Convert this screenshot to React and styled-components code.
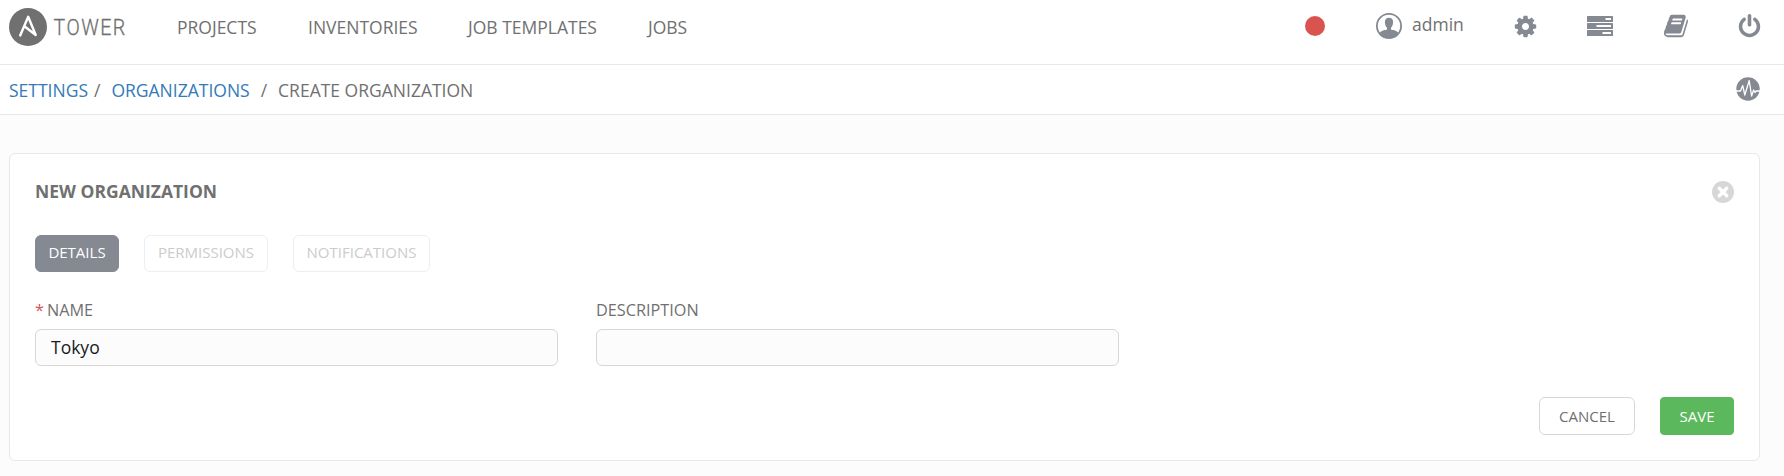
import React from "react";
import styled, { createGlobalStyle } from "styled-components";

const GlobalStyle = createGlobalStyle`
  * {
    box-sizing: border-box;
  }
  body {
    margin: 0;
    background-color: #fcfcfc;
    color: #707070;
    font-family: "Open Sans", "Noto Sans", sans-serif;
    font-size: 17.5px;
    line-height: 24px;
  }
  svg {
    display: block;
    flex-shrink: 0;
  }
`;

const Header = styled.header`
  display: flex;
  height: 65px;
  padding: 0 22px 0 9px;
  background-color: #fff;
  border-bottom: 1px solid #e8e8e8;
`;

const Logo = styled.a`
  display: flex;
  align-items: flex-start;
  width: 168px;
  padding-top: 8px;
`;

const Nav = styled.nav`
  display: flex;
  padding-top: 15px;
`;

const NavLink = styled.a`
  width: ${({ width }) => width}px;
  white-space: nowrap;
`;

const Actions = styled.div`
  display: flex;
  align-items: center;
  height: 52px;
  margin-left: auto;
  color: #848992;
`;

const StatusDot = styled.span`
  width: 20px;
  height: 20px;
  margin-right: 51px;
  border-radius: 50%;
  background-color: #d9534f;
`;

const User = styled.a`
  display: flex;
  align-items: center;
  width: 137px;
  span {
    margin: -4px 0 0 10px;
    color: #707070;
  }
`;

const ActionLink = styled.a`
  width: ${({ width }) => width}px;
`;

const BreadcrumbBar = styled.div`
  display: flex;
  align-items: center;
  height: 50px;
  padding: 1px 24px 0 9px;
  background-color: #fff;
  border-bottom: 1px solid #e8e8e8;
  white-space: pre;
  a {
    color: #337ab7;
  }
  svg {
    margin: -2px 0 0 auto;
  }
`;

const Separator = styled.span`
  margin: 0 ${({ after }) => after}px 0 ${({ before }) => before}px;
`;

const Panel = styled.section`
  height: 308px;
  margin: 38px 24px 0 9px;
  padding: 25px;
  background-color: #fff;
  border: 1px solid #e8e8e8;
  border-radius: 6px;
`;

const PanelHeader = styled.div`
  display: flex;
  align-items: center;
  justify-content: space-between;
  height: 26px;
  h1 {
    margin: -2px 0 0;
    font-size: 17.5px;
    font-weight: 700;
    line-height: 24px;
  }
`;

const Tabs = styled.div`
  display: flex;
  gap: 25px;
  margin-top: 30px;
`;

const Tab = styled.button`
  width: ${({ width }) => width}px;
  height: 37px;
  padding: 0 0 4px;
  background-color: ${({ active }) => (active ? "#848992" : "#fff")};
  border: 1px solid ${({ active }) => (active ? "#848992" : "#eeeeee")};
  border-radius: 6px;
  color: ${({ active }) => (active ? "#fff" : "#cccccc")};
  font-family: inherit;
  font-size: 15px;
`;

const Form = styled.form`
  display: flex;
  gap: 38px;
  margin-top: 25px;
`;

const Field = styled.label`
  width: 523px;
  font-size: 16.25px;
  line-height: 26px;
`;

const Required = styled.span`
  margin-right: 3px;
  color: #d9534f;
`;

const Input = styled.input`
  display: block;
  width: 100%;
  height: 37px;
  margin-top: 6px;
  padding: 0 15px 2px;
  background-color: #fcfcfc;
  border: 1px solid #d7d7d7;
  border-radius: 6px;
  outline: none;
  color: #161b1f;
  font-family: inherit;
  font-size: 17.5px;
`;

const Footer = styled.div`
  display: flex;
  justify-content: flex-end;
  gap: 25px;
  margin-top: 31px;
`;

const Button = styled.button`
  width: ${({ primary }) => (primary ? 74 : 96)}px;
  height: 38px;
  padding: 0;
  background-color: ${({ primary }) => (primary ? "#5cb85c" : "#fff")};
  border: 1px solid ${({ primary }) => (primary ? "#5cb85c" : "#d7d7d7")};
  border-radius: ${({ primary }) => (primary ? 4 : 6)}px;
  color: ${({ primary }) => (primary ? "#fff" : "#707070")};
  font-family: inherit;
  font-size: 15px;
`;

const LogoIcon = () => (
  <svg width="124" height="38" viewBox="0 0 124 38">
    <circle cx="19" cy="19" r="19" fill="#707070" />
    <path
      d="M11.200 27.500 19.200 8.800 26.700 27 15.400 18.200"
      fill="none"
      stroke="#fff"
      strokeWidth="2.400"
      strokeLinecap="round"
      strokeLinejoin="round"
    />
    <text
      transform="translate(44.5 26.5) scale(.87 1)"
      fill="#707070"
      stroke="#707070"
      strokeWidth="0.3"
      fontFamily="Roboto, sans-serif"
      fontSize="22.5"
      fontWeight="300"
      letterSpacing="1.7"
    >
      TOWER
    </text>
  </svg>
);

const UserIcon = () => (
  <svg width="26" height="26" viewBox="0 0 26 26">
    <circle cx="13" cy="13" r="12.100" fill="none" stroke="currentColor" strokeWidth="1.800" />
    <path
      d="M13 4.800c-2.800 0-4.100 1.700-4.100 4.200 0 2.600.9 4.600 2.100 5.800v1.800c-1.500.7-5 .4-7.500 3.400A11.500 11.500 0 0 0 13 25a11.500 11.500 0 0 0 9.500-5c-2.500-3-6-2.700-7.500-3.400v-1.800c1.200-1.200 2.100-3.200 2.100-5.800 0-2.500-1.300-4.200-4.100-4.200z"
      fill="currentColor"
    />
  </svg>
);

const CogIcon = () => (
  <svg width="25" height="25" viewBox="0 0 1792 1792">
    <path
      fill="currentColor"
      d="M1152 896q0-106-75-181t-181-75-181 75-75 181 75 181 181 75 181-75 75-181zm512-109v222q0 12-8 23t-20 13l-185 28q-19 54-39 91 35 50 107 138 10 12 10 25t-9 23q-27 37-99 108t-94 71q-12 0-26-9l-138-108q-44 23-91 38-16 136-29 186-7 28-36 28h-222q-14 0-24.500-8.500t-11.500-21.500l-28-184q-49-16-90-37l-141 107q-10 9-25 9-14 0-25-11-126-114-165-168-7-10-7-23 0-12 8-23 15-21 51-66.500t54-70.500q-27-50-41-99l-183-27q-13-2-21-12.500t-8-23.500v-222q0-12 8-23t19-13l186-28q14-46 39-92-40-57-107-138-10-12-10-24 0-10 9-23 26-36 98.500-107.500t94.500-71.500q13 0 26 10l138 107q44-23 91-38 16-136 29-186 7-28 36-28h222q14 0 24.500 8.500t11.500 21.500l28 184q49 16 90 37l142-107q9-9 24-9 13 0 25 10 129 119 165 170 7 8 7 22 0 12-8 23-15 21-51 66.500t-54 70.500q26 50 41 98l183 28q13 2 21 12.500t8 23.500z"
    />
  </svg>
);

const JobsIcon = () => (
  <svg width="26" height="20" viewBox="0 0 26 20">
    <path
      fill="currentColor"
      fillRule="evenodd"
      d="M.6 0h24.800q.6 0 .6.600v4.800q0 .6-.6.600H.6Q0 6 0 5.400V.6Q0 0 .6 0zM18.500 2v2h5.500V2zM.6 7h24.800q.6 0 .6.600v4.800q0 .6-.6.600H.6Q0 13 0 12.400V7.600Q0 7 .6 7zM9.500 9v2h14.500V9zM.6 14h24.800q.6 0 .6.600v4.800q0 .6-.6.600H.6Q0 20 0 19.400v-4.800Q0 14 .6 14zM15.500 16v2h8.500v-2z"
    />
  </svg>
);

const BookIcon = () => (
  <svg width="26" height="26" viewBox="0 0 1792 1792">
    <path
      fill="currentColor"
      d="M1703 478q40 57 18 129l-275 906q-19 64-76.500 107.500t-122.500 43.500h-923q-77 0-148.500-53.500t-99.500-131.500q-24-67-2-127 0-4 3-27t4-37q1-8-3-21.500t-3-19.500q2-11 8-21t16.500-23.500 16.500-23.500q23-38 45-91.500t30-91.500q3-10 .5-30t-.5-28q3-11 17-28t17-23q21-36 42-92t25-90q1-9-2.500-32t.5-28q4-13 22-30.500t22-22.500q19-26 42.500-84.500t27.500-96.500q1-8-3-25.500t-2-26.500q2-8 9-18t18-23 17-21q8-12 16.500-30.500t15-35 16-36 19.500-32 26.500-23.500 36-11.500 47.500 5.500l-1 3q38-9 51-9h761q74 0 114 56t18 130l-274 906q-36 119-71.500 153.500t-128.500 34.500h-869q-27 0-38 15-11 16-1 43 24 70 144 70h923q29 0 56-15.500t35-41.500l300-987q7-22 5-57 38 15 59 43zm-1064 2q-4 13 2 22.500t20 9.500h608q13 0 25.500-9.500t16.500-22.500l21-64q4-13-2-22.500t-20-9.500h-608q-13 0-25.500 9.500t-16.500 22.500zm-83 256q-4 13 2 22.500t20 9.500h608q13 0 25.500-9.500t16.500-22.500l21-64q4-13-2-22.500t-20-9.500h-608q-13 0-25.500 9.500t-16.500 22.500z"
    />
  </svg>
);

const PowerIcon = () => (
  <svg width="25" height="25" viewBox="0 0 1792 1792">
    <path
      fill="currentColor"
      d="M1664 896q0 156-61 298t-164 245-245 164-298 61-298-61-245-164-164-245-61-298q0-182 80.500-343t226.500-270q43-32 95.500-25t83.500 50q32 42 24.500 94.500t-49.500 84.500q-98 74-151.500 181t-53.500 228q0 104 40.500 198.500t109.500 163.500 163.500 109.500 198.500 40.500 198.500-40.500 163.500-109.500 109.500-163.500 40.500-198.500q0-121-53.500-228t-151.500-181q-42-32-49.500-84.500t24.500-94.500q31-43 84-50t95 25q146 109 226.500 270t80.500 343zm-640-768v640q0 52-38 90t-90 38-90-38-38-90v-640q0-52 38-90t90-38 90 38 38 90z"
    />
  </svg>
);

const ActivityIcon = () => (
  <svg width="24" height="24" viewBox="0 0 24 24">
    <circle cx="12" cy="12" r="11.700" fill="#848992" />
    <path
      d="M0 14h4.500l2.200-5.500L8.800 18l4.400-14.500L15.600 19l2-6 1.400 2.500 1.200-1.500H24"
      fill="none"
      stroke="#fff"
      strokeWidth="1.300"
      strokeLinejoin="round"
    />
  </svg>
);

const CloseIcon = () => (
  <svg width="22" height="22" viewBox="0 0 22 22">
    <circle cx="11" cy="11" r="11" fill="#d7d7d7" />
    <path d="m7.300 7.300 7.400 7.400m0-7.400-7.400 7.400" stroke="#fff" strokeWidth="3.400" strokeLinecap="round" />
  </svg>
);

const App = () => {
  return (
    <>
      <GlobalStyle />
      <Header>
        <Logo>
          <LogoIcon />
        </Logo>
        <Nav>
          <NavLink width={131}>PROJECTS</NavLink>
          <NavLink width={160}>INVENTORIES</NavLink>
          <NavLink width={180}>JOB TEMPLATES</NavLink>
          <NavLink width={60}>JOBS</NavLink>
        </Nav>
        <Actions>
          <StatusDot />
          <User>
            <UserIcon />
            <span>admin</span>
          </User>
          <ActionLink width={74}>
            <CogIcon />
          </ActionLink>
          <ActionLink width={76}>
            <JobsIcon />
          </ActionLink>
          <ActionLink width={74}>
            <BookIcon />
          </ActionLink>
          <ActionLink width={25}>
            <PowerIcon />
          </ActionLink>
        </Actions>
      </Header>
      <BreadcrumbBar>
        <a>SETTINGS</a>
        <Separator before={6} after={11}>/</Separator>
        <a>ORGANIZATIONS</a>
        <Separator before={11} after={11}>/</Separator>
        <span>CREATE ORGANIZATION</span>
        <ActivityIcon />
      </BreadcrumbBar>
      <Panel>
        <PanelHeader>
          <h1>NEW ORGANIZATION</h1>
          <CloseIcon />
        </PanelHeader>
        <Tabs>
          <Tab width={84} active>DETAILS</Tab>
          <Tab width={124}>PERMISSIONS</Tab>
          <Tab width={137}>NOTIFICATIONS</Tab>
        </Tabs>
        <Form>
          <Field>
            <Required>*</Required>NAME
            <Input defaultValue="Tokyo" />
          </Field>
          <Field>
            DESCRIPTION
            <Input />
          </Field>
        </Form>
        <Footer>
          <Button>CANCEL</Button>
          <Button primary>SAVE</Button>
        </Footer>
      </Panel>
    </>
  );
};

export default App;
